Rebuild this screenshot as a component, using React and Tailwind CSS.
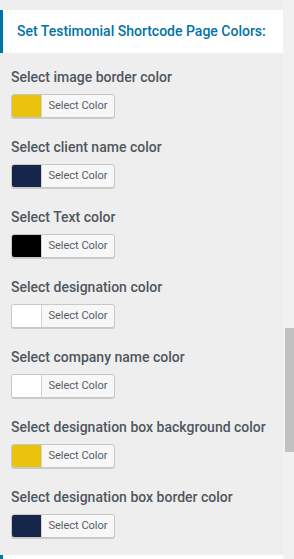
const rows = [
  { label: 'Select image border color', color: 'bg-[#ebc20c]' },
  { label: 'Select client name color', color: 'bg-[#16264a]' },
  { label: 'Select Text color', color: 'bg-[#000000]' },
  { label: 'Select designation color', color: 'bg-white' },
  { label: 'Select company name color', color: 'bg-white' },
  { label: 'Select designation box background color', color: 'bg-[#ebc20c]' },
  { label: 'Select designation box border color', color: 'bg-[#16264a]' },
];

function ColorButton({ color }) {
  return (
    <div className="mt-[6px] inline-flex h-[24px] w-[104px] overflow-hidden rounded-[3px] border border-[#c8c8c8] bg-[#f7f7f7] shadow-[0_1px_0_#cccccc]">
      <span className={`h-full w-[30px] border-r border-[#d4d4d4] ${color}`}></span>
      <span className="flex flex-1 items-center justify-center text-[11px] text-[#555d66]">Select Color</span>
    </div>
  );
}

export default function App() {
  return (
    <div className="flex h-[559px] w-[294px] overflow-hidden font-['Roboto',sans-serif]">
      <div className="w-[283px] bg-[#eeeeee] pt-[10px]">
        <div className="flex h-[43px] items-center border-l-[3px] border-[#0073aa] bg-white pl-[14px] text-[14px] font-medium text-[#0073aa]">
          Set Testimonial Shortcode Page Colors:
        </div>
        <div className="flex flex-col pl-[11px] pt-[13px]">
          {rows.map((r) => (
            <div key={r.label} className="flex h-[70px] flex-col items-start">
              <div className="h-[22px] text-[14px] font-medium leading-[23px] text-[#50575e]">{r.label}</div>
              <ColorButton color={r.color} />
            </div>
          ))}
        </div>
        <div className="-mt-[1px] h-[20px] border-l-[3px] border-[#0073aa] bg-white"></div>
      </div>
      <div className="flex-1 bg-[#f1f1f1] pl-[2px] pt-[328px]">
        <div className="h-[124px] bg-[#c1c1c1]"></div>
      </div>
    </div>
  );
}
